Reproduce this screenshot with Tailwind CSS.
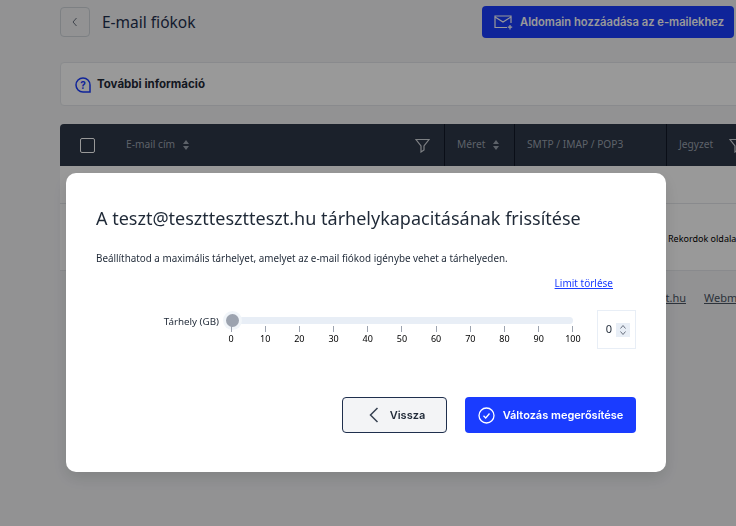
<!DOCTYPE html>
<html lang="en">

<head>
    <meta charset="UTF-8">
    <meta name="viewport" content="width=device-width, initial-scale=1.0">
    <script src="https://cdn.jsdelivr.net/npm/@tailwindcss/browser@4"></script>
    <title>E-mail fiókok</title>
</head>

<body class="h-[526px] w-[736px] overflow-hidden bg-[#f3f4f6] font-['Noto_Sans','Liberation_Sans',sans-serif] text-[#1f2937]">

    <!-- Page behind the modal -->
    <div class="w-[736px] overflow-hidden pl-[60px] pt-[6px]">
        <div class="flex h-[32px] w-[674px] items-center justify-between">
            <div class="flex items-center gap-[12px]">
                <div class="flex h-[30px] w-[30px] items-center justify-center rounded-[4px] border border-[#d1d5db]">
                    <svg width="12" height="12" viewBox="0 0 12 12" fill="none" stroke="#6b7280" stroke-width="1"><path d="M7.5 2 L4 6 L7.5 10"/></svg>
                </div>
                <h1 class="pt-[1px] text-[15.5px] text-[#1f2f4d]">E-mail fiókok</h1>
            </div>
            <button class="flex h-[32px] w-[252px] items-center gap-[7px] rounded-[4px] bg-[#1a3cff] pl-[12px] font-['Inter',sans-serif] text-[11.2px] font-semibold whitespace-nowrap text-white">
                <svg width="19" height="15" viewBox="0 0 19 15" fill="none" stroke="white" stroke-width="1.2"><path d="M13 12.5 H1 V1 H17 V8"/><path d="M1 2 L9 7 L17 2"/><path d="M16 10 V14.5 M13.8 12.2 H18.2"/></svg>
                Aldomain hozzáadása az e-mailekhez
            </button>
        </div>

        <div class="mt-[24px] flex h-[44px] w-[700px] items-center gap-[6px] rounded-[4px] border border-[#e5e7eb] bg-white pl-[14px] pt-[2px] font-['Inter',sans-serif] text-[11.5px] font-bold text-[#1f2937]">
            <svg width="16" height="16" viewBox="0 0 16 16" fill="none" stroke="#1a3cff" stroke-width="1.5"><path d="M15 15 H8 A7 7 0 1 1 15 8 Z"/><text x="8" y="12" text-anchor="middle" font-size="10" font-weight="700" fill="#1a3cff" stroke="none">?</text></svg>
            További információ
        </div>

        <div class="mt-[18px] flex h-[42px] w-[700px] items-center rounded-t-[4px] bg-[#2d3748] text-[10.2px] text-[#9ca3af]">
            <div class="flex h-full w-[385px] items-center border-r border-[#111827] pl-[20px] pr-[14px]">
                <div class="h-[15px] w-[15px] rounded-[2px] border border-white"></div>
                <span class="ml-[31px]">E-mail cím</span>
                <svg class="ml-[8px]" width="6" height="10" viewBox="0 0 6 10" fill="#9ca3af"><path d="M3 0 L6 4 H0 Z M3 10 L6 6 H0 Z"/></svg>
                <svg class="ml-auto" width="15" height="15" viewBox="0 0 15 15" fill="none" stroke="#d1d5db" stroke-width="1.2"><path d="M1 1.5 H14 L9 8 V12 L6 14 V8 Z"/></svg>
            </div>
            <div class="flex h-full w-[70px] items-center border-r border-[#111827] pl-[12px]">
                <span>Méret</span>
                <svg class="ml-[8px]" width="6" height="10" viewBox="0 0 6 10" fill="#9ca3af"><path d="M3 0 L6 4 H0 Z M3 10 L6 6 H0 Z"/></svg>
            </div>
            <div class="flex h-full w-[152px] items-center border-r border-[#111827] pl-[12px]">SMTP / IMAP / POP3</div>
            <div class="flex h-full items-center gap-[16px] pl-[12px]">
                <span>Jegyzet</span>
                <svg class="shrink-0" width="15" height="15" viewBox="0 0 15 15" fill="none" stroke="#d1d5db" stroke-width="1.2"><path d="M1 1.5 H14 L9 8 V12 L6 14 V8 Z"/></svg>
            </div>
        </div>

        <div class="h-[38px] w-[700px] border-b border-[#e5e7eb] bg-white"></div>
        <div class="h-[67px] w-[700px] border-b border-[#e5e7eb] bg-white pl-[608px] pt-[28px] text-[9px] leading-[14px] whitespace-nowrap text-black">Rekordok oldalanként</div>

        <div class="mt-[19px] flex w-[676px] justify-end gap-[18px] text-[11px] leading-[16px] text-[#4b5563] underline">
            <span>tanusitvanyok-start.hu</span>
            <span class="w-[32px] overflow-visible whitespace-nowrap">Webmail</span>
        </div>
    </div>

    <!-- Dimmed backdrop and modal -->
    <div class="fixed inset-0 z-10 bg-black/40"></div>
    <div class="fixed left-[66px] top-[173px] z-20 h-[299px] w-[600px] rounded-[10px] bg-white px-[30px] pt-[34px] shadow-[0_6px_16px_rgba(0,0,0,0.12)]">
        <h2 class="text-[18px] leading-[22px] font-normal text-[#1f2937]">A teszt@teszttesztteszt.hu tárhelykapacitásának frissítése</h2>
        <p class="mt-[22px] text-[9.85px] leading-[14px] text-[#1f2937]">Beállíthatod a maximális tárhelyet, amelyet az e-mail fiókod igénybe vehet a tárhelyeden.</p>

        <div class="mt-[11px] flex justify-end pr-[23px]">
            <a class="text-[10px] leading-[14px] text-[#1a3cff] underline">Limit törlése</a>
        </div>

        <div class="mt-[20px] flex h-[40px] items-start">
            <div class="w-[123px] pt-[5px] text-right text-[9.8px] leading-[14px]">Tárhely (GB)</div>
            <div class="relative ml-[12px] mt-[1px] h-[40px] w-[342px]">
                <div class="absolute left-0 top-[6px] h-[7px] w-full rounded-full bg-[#e8eef6]"></div>
                <div class="absolute left-[-5px] top-[3px] h-[13px] w-[13px] rounded-full bg-[#9ca3af] shadow-[0_0_0_3px_#f1f5f9]"></div>
                <div class="absolute left-0 top-[15px] flex w-full justify-between">
                    <span class="h-[6px] w-px bg-[#9ca3af]"></span><span class="h-[6px] w-px bg-[#9ca3af]"></span><span class="h-[6px] w-px bg-[#9ca3af]"></span><span class="h-[6px] w-px bg-[#9ca3af]"></span><span class="h-[6px] w-px bg-[#9ca3af]"></span><span class="h-[6px] w-px bg-[#9ca3af]"></span><span class="h-[6px] w-px bg-[#9ca3af]"></span><span class="h-[6px] w-px bg-[#9ca3af]"></span><span class="h-[6px] w-px bg-[#9ca3af]"></span><span class="h-[6px] w-px bg-[#9ca3af]"></span><span class="h-[6px] w-px bg-[#9ca3af]"></span>
                </div>
                <div class="absolute left-[-12px] top-[21px] flex w-[366px] justify-between text-[9px] leading-[14px] text-black">
                    <span class="w-[24px] text-center">0</span><span class="w-[24px] text-center">10</span><span class="w-[24px] text-center">20</span><span class="w-[24px] text-center">30</span><span class="w-[24px] text-center">40</span><span class="w-[24px] text-center">50</span><span class="w-[24px] text-center">60</span><span class="w-[24px] text-center">70</span><span class="w-[24px] text-center">80</span><span class="w-[24px] text-center">90</span><span class="w-[24px] text-center">100</span>
                </div>
            </div>
            <div class="ml-[24px] flex h-[39px] w-[39px] shrink-0 items-center justify-end gap-[4px] border border-[#e8eef6] pr-[5px] text-[11px] text-[#1f2937]">
                <span>0</span>
                <span class="flex h-[14px] w-[14px] items-center justify-center bg-[#e8eef6]">
                    <svg width="8" height="12" viewBox="0 0 8 12" fill="none" stroke="#6b7280" stroke-width="1"><path d="M1.5 4.5 L4 1.5 L6.5 4.5 M1.5 7.5 L4 10.5 L6.5 7.5"/></svg>
                </span>
            </div>
        </div>

        <div class="mt-[47px] flex justify-end gap-[18px] font-['Inter',sans-serif]">
            <button class="flex h-[36px] w-[105px] items-center justify-center gap-[10px] rounded-[4px] border border-[#1f2f4d] bg-[#f3f4f6] pl-[4px] text-[11px] font-semibold text-[#1f2937]">
                <svg width="12" height="16" viewBox="0 0 12 16" fill="none" stroke="#374151" stroke-width="1.5"><path d="M9.5 1 L2.5 8 L9.5 15"/></svg>
                Vissza
            </button>
            <button class="flex h-[36px] w-[171px] items-center justify-center gap-[8px] rounded-[4px] bg-[#1a3cff] text-[11px] font-semibold text-white">
                <svg width="17" height="17" viewBox="0 0 17 17" fill="none" stroke="white" stroke-width="1.3"><circle cx="8.5" cy="8.5" r="7.5"/><path d="M5.5 8.8 L7.7 11 L11.5 6.5"/></svg>
                Változás megerősítése
            </button>
        </div>
    </div>

</body>

</html>
